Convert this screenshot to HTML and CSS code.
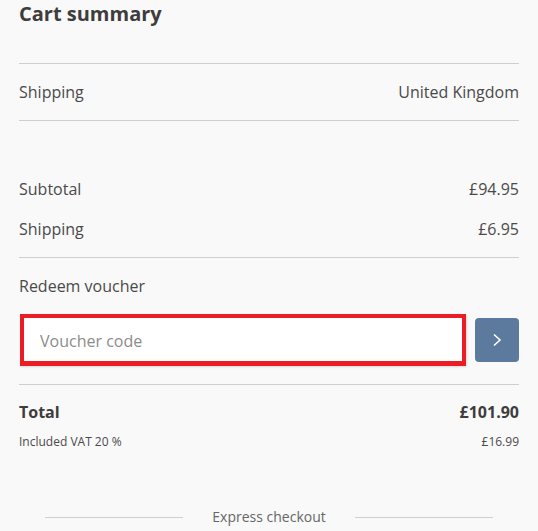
FILE: index.html
```html
<!DOCTYPE html>
<html lang="en">
<head>
<meta charset="utf-8">
<title>Cart summary</title>
<link rel="stylesheet" href="styles.css">
</head>
<body>
<div class="summary">
  <h2 class="title">Cart summary</h2>
  <div class="row ship-row">
    <span>Shipping</span>
    <span>United Kingdom</span>
  </div>
  <div class="totals">
    <div class="row line"><span>Subtotal</span><span>£94.95</span></div>
    <div class="row line"><span>Shipping</span><span>£6.95</span></div>
  </div>
  <div class="voucher">
    <div class="voucher-label">Redeem voucher</div>
    <div class="voucher-form">
      <input class="voucher-input" type="text" placeholder="Voucher code">
      <button class="voucher-btn" type="button" aria-label="Apply">
        <svg width="12" height="14" viewBox="0 0 12 14"><polyline points="3,1.5 9,7 3,12.5" fill="none" stroke="#ffffff" stroke-width="1.6"/></svg>
      </button>
    </div>
  </div>
  <div class="grand">
    <div class="row total"><span>Total</span><span>£101.90</span></div>
    <div class="row vat"><span>Included VAT 20 %</span><span>£16.99</span></div>
  </div>
  <div class="express">
    <span class="express-line"></span>
    <span class="express-text">Express checkout</span>
    <span class="express-line"></span>
  </div>
</div>
</body>
</html>
```
FILE: styles.css
```css
html, body {
  margin: 0;
  padding: 0;
  background: #f9f9f9;
}
body {
  font-family: "Open Sans", "Liberation Sans", sans-serif;
  color: #4a4a4a;
  font-size: 16px;
  line-height: 24px;
}
.summary {
  padding: 0 19px;
}
.title {
  margin: 0 0 35px;
  font-size: 20px;
  line-height: 28px;
  font-weight: 700;
  color: #3e3c3c;
}
.row {
  display: flex;
  justify-content: space-between;
  align-items: center;
}
.ship-row {
  border-top: 1px solid #cfcfcf;
  border-bottom: 1px solid #cfcfcf;
  padding: 16px 0;
}
.totals {
  padding: 48px 0 8px;
  border-bottom: 1px solid #cfcfcf;
}
.line {
  padding: 8px 0;
}
.voucher {
  padding: 16px 0 18px;
  border-bottom: 1px solid #cfcfcf;
}
.voucher-form {
  display: flex;
  align-items: center;
  gap: 9px;
  margin-top: 16px;
  padding-left: 1px;
}
.voucher-input {
  flex: 1;
  box-sizing: border-box;
  height: 52px;
  border: 4px solid #ec1c24;
  border-bottom-width: 5px;
  background: #ffffff;
  padding: 2px 16px 0;
  font-family: inherit;
  font-size: 16px;
  color: #4a4a4a;
  outline: none;
  box-shadow: 1px 1px 2px rgba(0,0,0,0.12);
}
.voucher-input::placeholder {
  color: #8c8c8c;
}
.voucher-btn {
  width: 44px;
  height: 44px;
  border: none;
  border-radius: 4px;
  background: #5b7a9d;
  padding: 0;
  display: flex;
  align-items: center;
  justify-content: center;
}
.grand {
  padding-top: 15px;
}
.total {
  font-weight: 700;
  color: #3e3c3c;
}
.vat {
  font-size: 12px;
  line-height: 18px;
  margin-top: 9px;
}
.express {
  display: flex;
  align-items: center;
  gap: 29px;
  padding: 0 26px;
  margin-top: 56px;
}
.express-line {
  flex: 1;
  height: 1px;
  background: #cfcfcf;
}
.express-text {
  font-size: 14px;
  line-height: 20px;
  color: #666666;
}
```
